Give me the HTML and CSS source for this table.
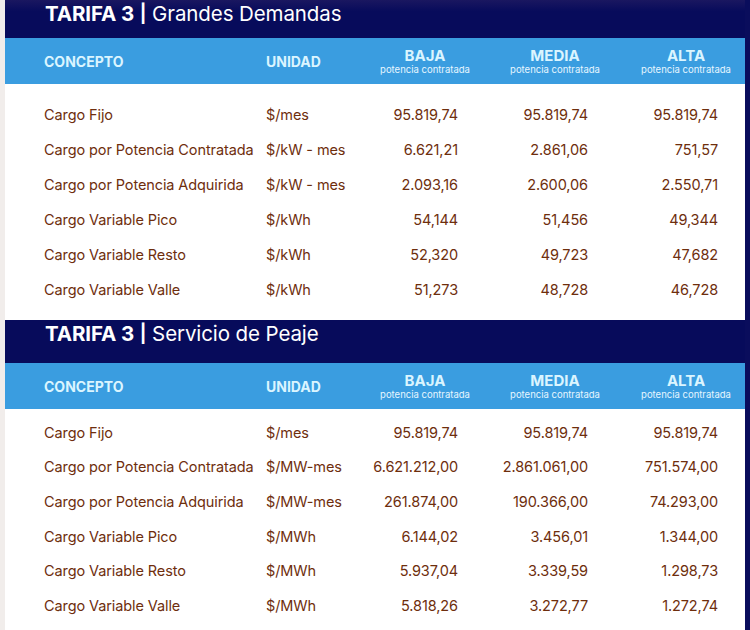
FILE: index.html
```html
<!DOCTYPE html>
<html lang="es">
<head>
<meta charset="utf-8">
<title>Tarifa 3</title>
<link rel="stylesheet" href="styles.css">
</head>
<body>
<div class="page">
  <section class="tarifa tarifa--first">
    <h2 class="title"><strong>TARIFA 3</strong> <span class="bar">|</span> Grandes Demandas</h2>
    <div class="grid head">
      <div class="h-left">CONCEPTO</div>
      <div class="h-left">UNIDAD</div>
      <div class="h-col">BAJA<span>potencia contratada</span></div>
      <div class="h-col">MEDIA<span>potencia contratada</span></div>
      <div class="h-col h-last">ALTA<span>potencia contratada</span></div>
    </div>
    <div class="rows">
      <div class="grid row"><div>Cargo Fijo</div><div>$/mes</div><div class="num">95.819,74</div><div class="num">95.819,74</div><div class="num">95.819,74</div></div>
      <div class="grid row"><div>Cargo por Potencia Contratada</div><div>$/kW - mes</div><div class="num">6.621,21</div><div class="num">2.861,06</div><div class="num">751,57</div></div>
      <div class="grid row"><div>Cargo por Potencia Adquirida</div><div>$/kW - mes</div><div class="num">2.093,16</div><div class="num">2.600,06</div><div class="num">2.550,71</div></div>
      <div class="grid row"><div>Cargo Variable Pico</div><div>$/kWh</div><div class="num">54,144</div><div class="num">51,456</div><div class="num">49,344</div></div>
      <div class="grid row"><div>Cargo Variable Resto</div><div>$/kWh</div><div class="num">52,320</div><div class="num">49,723</div><div class="num">47,682</div></div>
      <div class="grid row"><div>Cargo Variable Valle</div><div>$/kWh</div><div class="num">51,273</div><div class="num">48,728</div><div class="num">46,728</div></div>
    </div>
  </section>
  <section class="tarifa tarifa--second">
    <h2 class="title"><strong>TARIFA 3</strong> <span class="bar">|</span> Servicio de Peaje</h2>
    <div class="grid head">
      <div class="h-left">CONCEPTO</div>
      <div class="h-left">UNIDAD</div>
      <div class="h-col">BAJA<span>potencia contratada</span></div>
      <div class="h-col">MEDIA<span>potencia contratada</span></div>
      <div class="h-col h-last">ALTA<span>potencia contratada</span></div>
    </div>
    <div class="rows">
      <div class="grid row"><div>Cargo Fijo</div><div>$/mes</div><div class="num">95.819,74</div><div class="num">95.819,74</div><div class="num">95.819,74</div></div>
      <div class="grid row"><div>Cargo por Potencia Contratada</div><div>$/MW-mes</div><div class="num">6.621.212,00</div><div class="num">2.861.061,00</div><div class="num">751.574,00</div></div>
      <div class="grid row"><div>Cargo por Potencia Adquirida</div><div>$/MW-mes</div><div class="num">261.874,00</div><div class="num">190.366,00</div><div class="num">74.293,00</div></div>
      <div class="grid row"><div>Cargo Variable Pico</div><div>$/MWh</div><div class="num">6.144,02</div><div class="num">3.456,01</div><div class="num">1.344,00</div></div>
      <div class="grid row"><div>Cargo Variable Resto</div><div>$/MWh</div><div class="num">5.937,04</div><div class="num">3.339,59</div><div class="num">1.298,73</div></div>
      <div class="grid row"><div>Cargo Variable Valle</div><div>$/MWh</div><div class="num">5.818,26</div><div class="num">3.272,77</div><div class="num">1.272,74</div></div>
    </div>
  </section>
</div>
</body>
</html>
```

FILE: styles.css
```css
html, body {
  margin: 0;
  padding: 0;
}
body {
  background: #0a0d5c;
  font-family: Inter, "Noto Sans", sans-serif;
  width: 750px;
  height: 630px;
  overflow: hidden;
}
.page {
  width: 740px;
  height: 630px;
  border-left: 5px solid #f1edeb;
  background: #ffffff;
}
.title {
  margin: 0;
  background: #070b5b;
  color: #ffffff;
  font-size: 20.5px;
  font-weight: 400;
  line-height: 22px;
  padding-left: 40px;
  letter-spacing: -0.1px;
  box-sizing: border-box;
}
.title strong {
  font-weight: 700;
}
.title .bar {
  font-weight: 700;
  font-size: 18px;
  position: relative;
  top: -1px;
}
.tarifa--first .title {
  height: 38px;
  padding-top: 3px;
  background: linear-gradient(180deg, #1a1760 0%, #070b5b 30%);
}
.tarifa--second .title {
  height: 43px;
  padding-top: 3px;
}
.grid {
  display: grid;
  grid-template-columns: 222px 94px 130px 130px 125px;
  padding-left: 39px;
  align-items: center;
}
.head {
  background: #3a9de0;
  height: 46px;
  color: #dbf5ff;
  font-weight: 700;
  font-size: 14px;
}
.h-left {
  padding-top: 1px;
}
.h-col {
  display: flex;
  flex-direction: column;
  align-items: center;
  font-size: 15px;
  line-height: 16px;
  padding-top: 0;
}
.h-col span {
  font-size: 9.5px;
  font-weight: 400;
  line-height: 11px;
  color: #e6f6ff;
}
.h-last {
  padding-left: 7px;
}
.rows {
  padding: 13px 0;
}
.tarifa--second .rows {
  padding: 6px 0 0;
}
.row {
  height: 35px;
  font-size: 14.5px;
  color: #6e2e0d;
  letter-spacing: -0.1px;
}
.tarifa--second .row {
  height: 34.6px;
}
.num {
  text-align: right;
  padding-right: 32px;
}
.row .num:last-child {
  padding-right: 27px;
}
```
